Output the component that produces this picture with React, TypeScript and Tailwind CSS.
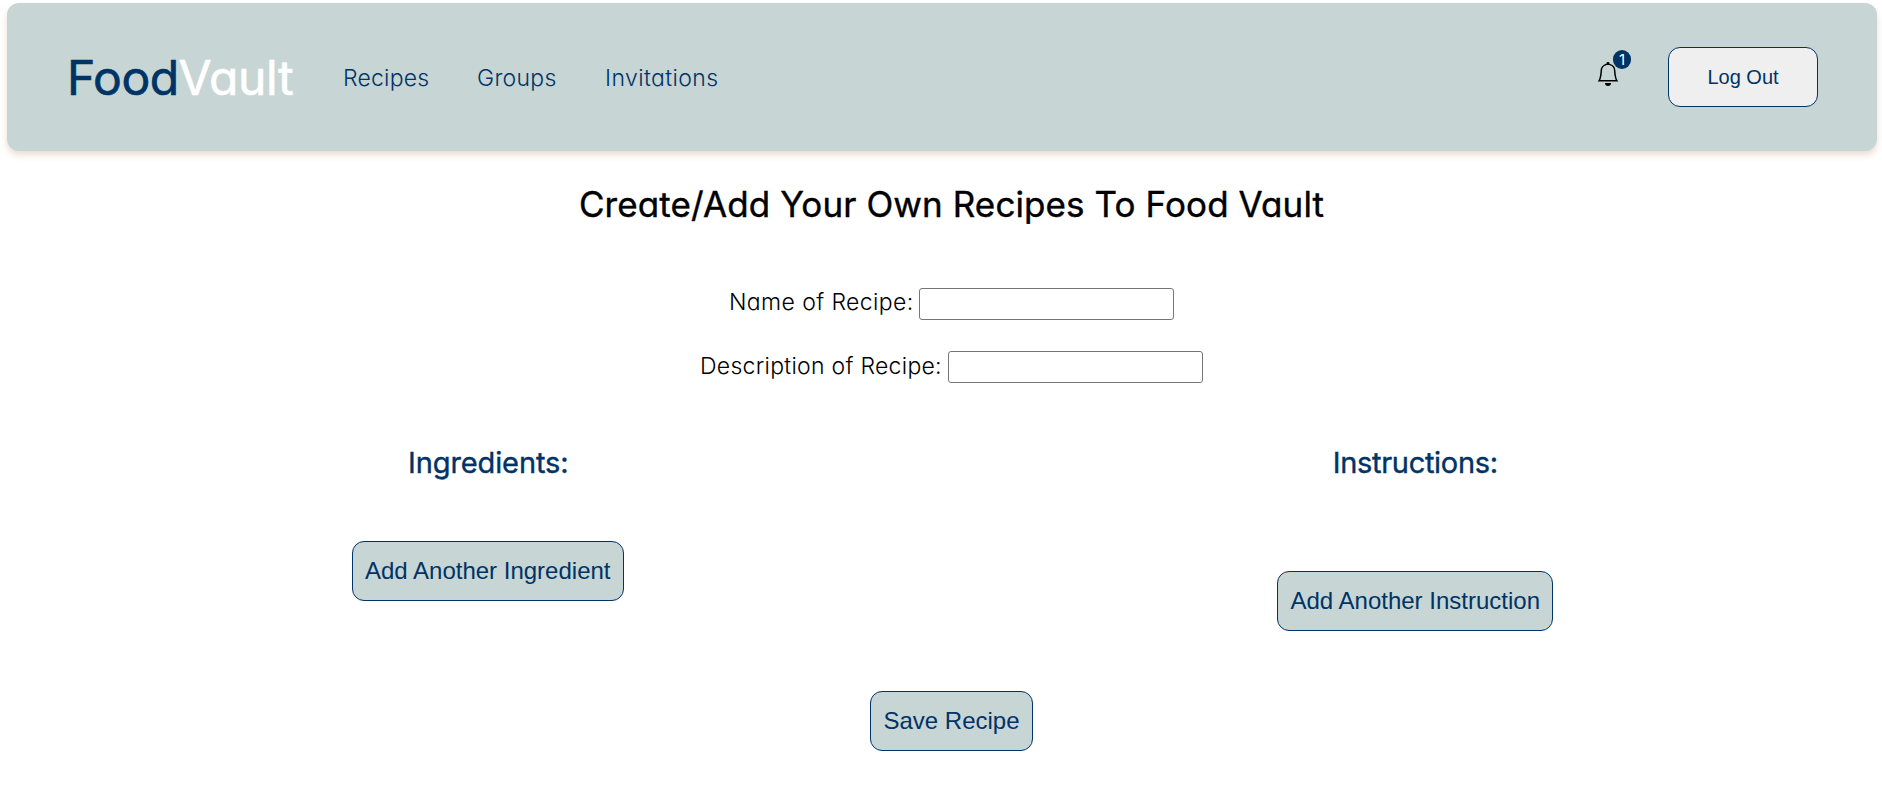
import { BsBell } from "react-icons/bs";

const navLinks = [
  { label: "Recipes", className: "w-[134px] tracking-[0.2px]" },
  { label: "Groups", className: "w-[128px] tracking-[0.3px]" },
  { label: "Invitations", className: "tracking-[0.4px]" },
];

const actionButton =
  "h-[60px] rounded-xl border border-[#003366] bg-[#c7d5d4] text-center font-['Liberation_Sans',sans-serif] text-2xl whitespace-nowrap text-[#003366]";

function Header() {
  return (
    <header className="mt-[3px] mr-[5px] ml-[7px] flex h-[148px] items-center rounded-xl bg-[#c7d5d4] pr-[59px] pl-[60px] text-[#003366] shadow-[0_4px_6px_rgba(200,170,145,0.4)]">
      <div className="flex w-[276px] pt-[2px] text-[48px] leading-[60px] font-normal [-webkit-text-stroke:0.7px_currentColor]">
        <span className="w-[111.5px] tracking-[-0.4px]">Food</span>
        <span className="tracking-[-0.3px] text-white">Vault</span>
      </div>
      <nav className="flex pt-px text-[23px] leading-8 font-light">
        {navLinks.map((link) => (
          <a key={link.label} href="#" className={link.className}>
            {link.label}
          </a>
        ))}
      </nav>
      <div className="ml-auto flex items-center">
        <div className="relative mr-[48px] mb-[6px] text-black">
          <BsBell size={24} />
          <span className="absolute -top-[12px] left-[17px] flex h-[19px] w-[18px] items-center justify-center rounded-full bg-[#003366] text-[15px] leading-none text-white">
            1
          </span>
        </div>
        <button className="h-[60px] w-[150px] rounded-xl border border-[#003366] bg-[#efefef] pb-px font-['Liberation_Sans',sans-serif] text-xl">
          Log Out
        </button>
      </div>
    </header>
  );
}

export default function App() {
  return (
    <div className="flow-root min-h-[804px] bg-white font-['Inter',sans-serif] text-black [font-feature-settings:'cv11']">
      <Header />
      <main className="ml-[24px] flex w-[1855px] flex-col items-center pt-[31px]">
        <h1 className="text-[35px] leading-[44px] font-normal tracking-[0.1px] whitespace-nowrap [-webkit-text-stroke:0.4px_currentColor]">
          Create/Add Your Own Recipes To Food Vault
        </h1>
        <label className="mt-[62px] flex h-8 items-center text-[23px] leading-7 font-light whitespace-nowrap">
          <span className="w-[190px] pb-[4px] tracking-[0.4px]">Name of Recipe:</span>
          <input className="h-8 w-[255px] rounded-[3px] border border-[#767676] bg-white" />
        </label>
        <label className="mt-[31px] flex h-8 items-center text-[23px] leading-7 font-light whitespace-nowrap">
          <span className="w-[248px] pb-[3px] tracking-[0.28px]">Description of Recipe:</span>
          <input className="h-8 w-[255px] rounded-[3px] border border-[#767676] bg-white" />
        </label>
        <div className="mt-[60px] grid w-full grid-cols-2 text-[29px] leading-10 text-[#003366]">
          <section className="flex flex-col items-center">
            <h2 className="pl-px tracking-[-0.1px] [-webkit-text-stroke:0.4px_currentColor]">Ingredients:</h2>
            <button className={`mt-[58px] w-[272px] ${actionButton}`}>Add Another Ingredient</button>
          </section>
          <section className="flex flex-col items-center">
            <h2 className="tracking-[-0.3px] [-webkit-text-stroke:0.4px_currentColor]">Instructions:</h2>
            <button className={`mt-[88px] w-[276px] ${actionButton}`}>Add Another Instruction</button>
          </section>
        </div>
        <button className={`mt-[60px] w-[163px] ${actionButton}`}>Save Recipe</button>
      </main>
    </div>
  );
}
